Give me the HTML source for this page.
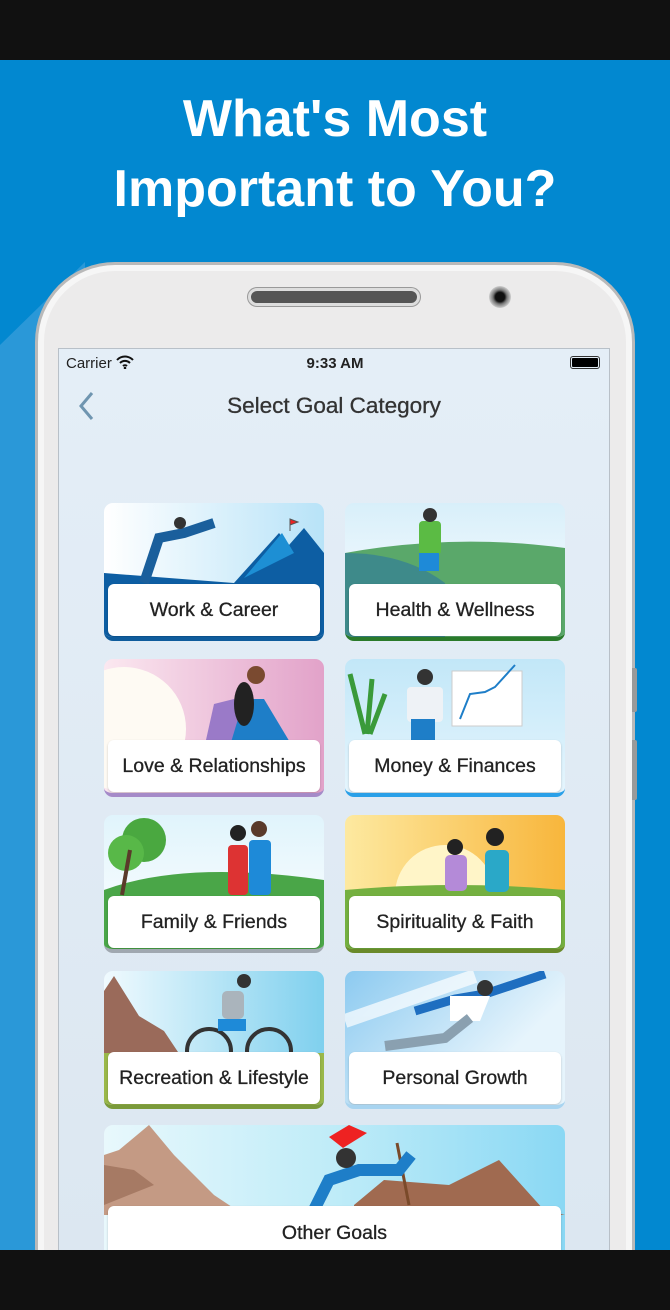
<!DOCTYPE html>
<html><head><meta charset="utf-8"><style>
*{margin:0;padding:0;box-sizing:border-box}
html,body{width:670px;height:1310px;overflow:hidden}
body{background:#0288d0;font-family:"Liberation Sans",sans-serif;position:relative}
.bar{position:absolute;left:0;width:670px;background:#111;z-index:10}
.tri{position:absolute;left:0;top:0}
h1{position:absolute;top:84px;left:0;width:670px;text-align:center;color:#fff;font-size:52px;line-height:70px;font-weight:bold}
.phone{position:absolute;left:35px;top:262px;width:600px;height:1048px;background:#ecebeb;border:3px solid #b9b9b9;border-bottom:none;border-radius:80px 80px 0 0;box-shadow:inset 0 0 0 6px #f6f6f6}
.spk{position:absolute;left:248px;top:288px;width:172px;height:18px;border-radius:9px;background:#555;border:3px solid #ddd;box-shadow:0 0 0 1px #999}
.cam{position:absolute;left:489px;top:286px;width:22px;height:22px;border-radius:50%;background:radial-gradient(#111 30%,#777 45%,#ccc 70%)}
.side{position:absolute;left:632px;width:5px;background:#9a9a9a;border-radius:0 2px 2px 0}
.screen{position:absolute;left:58px;top:348px;width:552px;height:910px;background:linear-gradient(#e4eef7,#dce7f1);border:1px solid #b8c0c8}
.st{position:absolute;top:355px;font-size:15px;color:#222}
.title{position:absolute;top:393px;left:58px;width:552px;text-align:center;font-size:22.5px;color:#333;-webkit-text-stroke:.3px #333}
.card{position:absolute;width:220px;height:138px;border-radius:9px;overflow:hidden}
.card svg{position:absolute;left:0;top:0}
.lab{position:absolute;left:4px;top:81px;right:4px;height:52px;background:#fff;border-radius:6px;text-align:center;line-height:53px;font-size:19.5px;color:#222;-webkit-text-stroke:.3px #222;box-shadow:0 1px 2px rgba(0,0,0,.2)}
</style></head><body>
<svg class="tri" width="670" height="1310"><polygon points="0,345 85,262 85,1310 0,1310" fill="#2a98d8"/></svg>
<div class="bar" style="top:0;height:60px"></div>
<h1>What's Most<br>Important to You?</h1>
<div class="phone"></div>
<div class="spk"></div><div class="cam"></div>
<div class="side" style="top:668px;height:44px"></div>
<div class="side" style="top:740px;height:60px"></div>
<div class="screen"></div>
<div class="st" style="left:66px">Carrier <svg width="18" height="14" viewBox="0 0 18 14" style="vertical-align:-1px"><path d="M1 5a11 11 0 0 1 16 0M4 8a7 7 0 0 1 10 0M7 11a3 3 0 0 1 4 0" stroke="#111" stroke-width="2" fill="none"/><circle cx="9" cy="13" r="1.3" fill="#111"/></svg></div>
<div class="st" style="left:0;width:670px;text-align:center;font-weight:bold;font-size:15px">9:33 AM</div>
<div style="position:absolute;left:570px;top:356px;width:30px;height:13px;border:1.5px solid #333;border-radius:3px;padding:1px"><div style="background:#000;height:100%;border-radius:1px"></div></div>
<svg style="position:absolute;left:76px;top:391px" width="20" height="30"><path d="M16 2 5 15l11 13" stroke="#6f95b0" stroke-width="3" fill="none"/></svg>
<div class="title">Select Goal Category</div>

<div class="card" style="left:104px;top:503px;background:linear-gradient(90deg,#fff,#b8e3f8);border-bottom:4px solid #0f5c9c">
<svg width="220" height="138"><polygon points="130,80 175,30 185,42 200,25 220,50 220,140 0,140 0,70" fill="#0d5ea3"/><polygon points="140,75 178,30 190,50" fill="#1d8fd4"/><path d="M186 28v-12l8 3-8 3" fill="#e22" stroke="#555"/><path d="M40 80l15-45 25-5 30-10" stroke="#1a5f9c" stroke-width="10" fill="none"/><circle cx="76" cy="20" r="6" fill="#333"/></svg>
<div class="lab">Work &amp; Career</div></div>

<div class="card" style="left:345px;top:503px;background:linear-gradient(#d8effa,#fff);border-bottom:4px solid #2a7a2a">
<svg width="220" height="138"><path d="M0 50q110-20 220-5v95H0z" fill="#5aa86a"/><path d="M0 50q60 0 100 30v60H0z" fill="#3e8a8a"/><rect x="74" y="18" width="22" height="34" rx="4" fill="#5bbb44"/><rect x="74" y="50" width="20" height="18" fill="#1e8ad8"/><circle cx="85" cy="12" r="7" fill="#333"/></svg>
<div class="lab">Health &amp; Wellness</div></div>

<div class="card" style="left:104px;top:659px;background:linear-gradient(90deg,#fbe8f0,#e2a2c9);border-bottom:4px solid #a58ac8">
<svg width="220" height="138"><circle cx="20" cy="70" r="62" fill="#fefaf3"/><path d="M100 90l10-45 20-5 15 50z" fill="#9a7ac8"/><path d="M125 90l15-50 20 0 30 50z" fill="#1e7ec8"/><ellipse cx="140" cy="45" rx="10" ry="22" fill="#222"/><circle cx="152" cy="16" r="9" fill="#7a4a30"/></svg>
<div class="lab">Love &amp; Relationships</div></div>

<div class="card" style="left:345px;top:659px;background:linear-gradient(#c2e7f8,#e5f5fd);border-bottom:4px solid #2aa0e8">
<svg width="220" height="138"><rect x="107" y="12" width="70" height="55" fill="#fff" stroke="#ccc"/><path d="M115 60l10-25 15-2 10-5 20-22" stroke="#1e7ec8" stroke-width="2" fill="none"/><rect x="62" y="28" width="36" height="35" rx="4" fill="#eef2f6"/><rect x="66" y="60" width="24" height="25" fill="#1e7ec8"/><circle cx="80" cy="18" r="8" fill="#333"/><path d="M20 75l-15-60M22 75l5-55M25 75l15-40" stroke="#3a9a3a" stroke-width="5"/></svg>
<div class="lab">Money &amp; Finances</div></div>

<div class="card" style="left:104px;top:815px;background:linear-gradient(#e0f4fc,#fff);border-bottom:4px solid #a0a8b0">
<svg width="220" height="138"><path d="M0 75q80-30 220-10v75H0z" fill="#4aa648"/><circle cx="40" cy="25" r="22" fill="#4aa840"/><circle cx="22" cy="38" r="18" fill="#58b848"/><path d="M18 80l8-45" stroke="#5a3a2a" stroke-width="4"/><rect x="124" y="30" width="20" height="50" rx="4" fill="#d33"/><rect x="145" y="25" width="22" height="55" rx="4" fill="#1e8ad8"/><circle cx="134" cy="18" r="8" fill="#222"/><circle cx="155" cy="14" r="8" fill="#5a3a2a"/></svg>
<div class="lab">Family &amp; Friends</div></div>

<div class="card" style="left:345px;top:815px;background:linear-gradient(90deg,#fde9a0,#f8b63c);border-bottom:4px solid #6a8a2a">
<svg width="220" height="138"><circle cx="100" cy="80" r="50" fill="#fff5c8"/><path d="M0 75q110-10 220 0v65H0z" fill="#74b040"/><rect x="100" y="40" width="22" height="36" rx="5" fill="#b48ad8"/><rect x="140" y="35" width="24" height="42" rx="5" fill="#2aa8c8"/><circle cx="110" cy="32" r="8" fill="#222"/><circle cx="150" cy="22" r="9" fill="#222"/></svg>
<div class="lab">Spirituality &amp; Faith</div></div>

<div class="card" style="left:104px;top:971px;background:linear-gradient(90deg,#f0fafe,#7fd0ee);border-bottom:4px solid #7a9a3a">
<svg width="220" height="138"><polygon points="0,20 10,5 35,45 60,60 80,90 0,90" fill="#9a6a5a"/><rect x="0" y="82" width="220" height="56" fill="#9ab84a"/><circle cx="105" cy="80" r="22" fill="none" stroke="#333" stroke-width="4"/><circle cx="165" cy="80" r="22" fill="none" stroke="#333" stroke-width="4"/><rect x="118" y="20" width="22" height="28" rx="5" fill="#aab4bc"/><rect x="114" y="48" width="28" height="12" fill="#1e8ad8"/><circle cx="140" cy="10" r="7" fill="#333"/></svg>
<div class="lab">Recreation &amp; Lifestyle</div></div>

<div class="card" style="left:345px;top:971px;background:linear-gradient(135deg,#8ccaf0,#e6f4fc 70%);border-bottom:4px solid #a8d4f0">
<svg width="220" height="138"><path d="M0 50l130-45" stroke="#fff" stroke-width="14" opacity=".7"/><path d="M70 40l40-12 30-5 60-20" stroke="#1e6ec0" stroke-width="9" fill="none"/><path d="M105 25l40 0-10 25-30 0z" fill="#fff"/><path d="M40 75l60-8 25-20" stroke="#8aa0b0" stroke-width="10" fill="none"/><circle cx="140" cy="17" r="8" fill="#333"/></svg>
<div class="lab">Personal Growth</div></div>

<div class="card" style="left:104px;top:1125px;width:461px;height:140px;background:linear-gradient(90deg,#e8f8fc,#bfecf8 50%,#8ad8f4)">
<svg width="461" height="140"><polygon points="0,30 15,25 45,0 70,30 110,70 140,90 0,90" fill="#c49a84"/><polygon points="0,40 30,45 50,60 0,80" fill="#a67a64"/><polygon points="250,80 280,55 345,60 395,35 440,85 461,90 250,90" fill="#a06a50"/><path d="M305 80l-12-62" stroke="#7a4a2a" stroke-width="3"/><path d="M225 12l20-12 18 8-24 15z" fill="#e22"/><path d="M210 85l15-30 30-10 40 0 12-15" stroke="#1e7ec8" stroke-width="12" fill="none"/><circle cx="242" cy="33" r="10" fill="#333"/></svg>
<div class="lab" style="top:81px;height:70px;line-height:54px">Other Goals</div></div>

<div class="bar" style="top:1250px;height:60px"></div>
</body></html>
